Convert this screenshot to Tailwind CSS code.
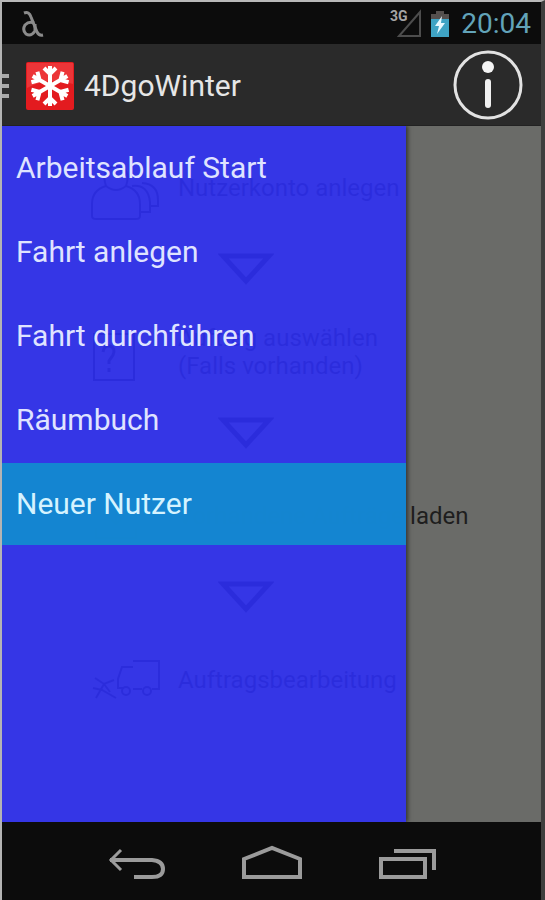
<!DOCTYPE html>
<html lang="de">
<head>
    <meta charset="UTF-8">
    <meta name="viewport" content="width=device-width, initial-scale=1.0">
    <title>4DgoWinter</title>
    <script src="https://cdn.jsdelivr.net/npm/@tailwindcss/browser@4"></script>
</head>
<body class="bg-[#0c0c0c] font-['Roboto','Liberation_Sans',sans-serif]">
    <div class="min-h-screen flex flex-col border-t-2 border-l-2 border-t-[#b9b9b9] border-l-[#b4b4b4] border-r-4 border-r-[#3e3f3e]">

        <!-- Status bar -->
        <div class="h-[42px] shrink-0 flex items-center bg-[#0c0c0c] pl-5 pr-[10px] pt-[2px]">
            <svg class="w-[22px] h-[28px]" viewBox="0 0 22 28" fill="none" stroke="#8b8b8b" stroke-width="3" role="img" aria-label="Debug">
                <path d="M2 3 Q7 1 9 7 L15 22 Q17 26 21 25"/>
                <path d="M12 13 Q7 11 3 15 Q0 20 4 24 Q9 27 13 21 L13 14"/>
            </svg>
            <div class="ml-auto flex items-center gap-2">
                <svg class="w-[34px] h-[32px]" viewBox="0 0 34 32" role="img" aria-label="Signal">
                    <text x="1" y="13" font-size="14" font-weight="700" fill="#a5a5a5">3G</text>
                    <path d="M31 4 V28 H10 Z" fill="none" stroke="#4d4d4d" stroke-width="2"/>
                </svg>
                <svg class="w-[18px] h-[28px]" viewBox="0 0 18 28" role="img" aria-label="Akku">
                    <path d="M5 1 H13 V4 H18 V10 H0 V4 H5 Z" fill="#55504e"/>
                    <path d="M0 9 H18 V27 H0 Z" fill="#3fa3c4"/>
                    <path d="M11 6 L4 16 H8 L6 24 L14 13 H10 Z" fill="#e8f8ff"/>
                </svg>
                <span class="text-[28px] leading-8 text-[#62a3b9] ml-1">20:04</span>
            </div>
        </div>

        <!-- Action bar -->
        <header class="h-[82px] shrink-0 flex items-center bg-[#2a2a2a] pr-[18px] pt-[2px] border-b border-[#222]">
            <button type="button" aria-label="Menü" class="flex items-center gap-4">
                <svg class="w-2 h-[28px]" viewBox="0 0 8 28" stroke="#a8a8a8" stroke-width="4">
                    <path d="M0 4 H7 M0 14 H7 M0 24 H7"/>
                </svg>
                <svg class="w-[48px] h-[48px]" viewBox="0 0 48 48" fill="none">
                    <rect width="48" height="48" rx="2" fill="#e31b1f"/>
                    <path d="M1 1 H47 V22 Q24 14 1 26 Z" fill="#ec3538"/>
                    <g stroke="#fff" stroke-width="4">
                        <path id="arm" d="M24 24 V4 M18 6 L24 12 L30 6"/>
                        <use href="#arm" transform="rotate(60 24 24)"/>
                        <use href="#arm" transform="rotate(120 24 24)"/>
                        <use href="#arm" transform="rotate(180 24 24)"/>
                        <use href="#arm" transform="rotate(240 24 24)"/>
                        <use href="#arm" transform="rotate(300 24 24)"/>
                    </g>
                </svg>
            </button>
            <h1 class="ml-[10px] text-[30px] leading-9 text-[#e6e6e6]">4DgoWinter</h1>
            <button type="button" aria-label="Info" class="ml-auto">
                <svg class="w-[70px] h-[72px]" viewBox="0 0 70 72" fill="none">
                    <circle cx="35" cy="35" r="33" stroke="#e2e2e2" stroke-width="3"/>
                    <circle cx="35" cy="17" r="6" fill="#f4f4f4"/>
                    <path d="M35 32 V55" stroke="#f0f0f0" stroke-width="6" stroke-linecap="round"/>
                </svg>
            </button>
        </header>

        <div class="relative grow overflow-hidden bg-[#6a6b68]">
            <!-- Workflow steps, behind the drawer -->
            <main class="pl-[88px] pt-[21px] text-[24px] leading-7 text-[#1e1e1e] whitespace-nowrap">
                <div class="h-[82px] flex items-center gap-[18px]">
                    <svg class="w-[70px] h-16 shrink-0" viewBox="0 0 70 64" fill="none" stroke="currentColor" stroke-width="2">
                        <path d="M16 30 Q10 12 26 10 Q42 12 36 30 Q26 38 16 30 Z"/>
                        <path d="M16 30 Q2 34 2 48 V60 Q2 63 6 63 H46 Q50 63 50 60 V48 Q50 34 36 30"/>
                        <path d="M42 30 Q58 28 60 46 V56 H51 M52 27 Q68 28 68 44 V50 H61"/>
                    </svg>
                    <span>Nutzerkonto anlegen</span>
                </div>
                <div class="h-[82px] flex items-center pl-32">
                    <svg class="w-[56px] h-9" viewBox="0 0 56 36" fill="none" stroke="currentColor" stroke-width="5">
                        <path d="M5 4 H51 L28 29 Z"/>
                    </svg>
                </div>
                <div class="h-[82px] flex items-center gap-[18px]">
                    <svg class="w-[70px] h-16 shrink-0" viewBox="0 0 70 64" fill="none" stroke="currentColor" stroke-width="2">
                        <path d="M4 14 H44 V60 H4 Z"/>
                        <path d="M13 32 Q14 25 20 26 Q26 28 23 35 L19 41 V44 M19 48 V52" stroke-width="3"/>
                    </svg>
                    <span>Auftrag auswählen<br>(Falls vorhanden)</span>
                </div>
                <div class="h-[82px] flex items-center pl-32">
                    <svg class="w-[56px] h-9" viewBox="0 0 56 36" fill="none" stroke="currentColor" stroke-width="5">
                        <path d="M5 4 H51 L28 29 Z"/>
                    </svg>
                </div>
                <div class="h-[82px] flex items-center gap-[18px]">
                    <svg class="w-[70px] h-16 shrink-0" viewBox="0 0 70 64" fill="none" stroke="currentColor" stroke-width="2">
                        <path d="M26 10 V40 M16 30 L26 40 L36 30 M6 44 V54 H46 V44"/>
                    </svg>
                    <span>Vorhandene Aufträge laden</span>
                </div>
                <div class="h-[82px] flex items-center pl-32">
                    <svg class="w-[56px] h-9" viewBox="0 0 56 36" fill="none" stroke="currentColor" stroke-width="5">
                        <path d="M5 4 H51 L28 29 Z"/>
                    </svg>
                </div>
                <div class="h-[82px] flex items-center gap-[18px]">
                    <svg class="w-[70px] h-16 shrink-0" viewBox="0 0 70 64" fill="none" stroke="currentColor" stroke-width="2">
                        <path d="M43 13 H69 V41 H62 M52 41 H43 Z M43 19 H32 L28 31 V40 H34"/>
                        <circle cx="57" cy="43" r="4"/>
                        <circle cx="36" cy="43" r="4"/>
                        <path d="M5 30 L14 36 L24 32 M14 36 L20 44 M14 36 L6 50 M3 40 L12 42 L26 50"/>
                    </svg>
                    <span>Auftragsbearbeitung</span>
                </div>
            </main>

            <!-- Navigation drawer -->
            <nav class="absolute inset-y-0 left-0 w-3/4 bg-[#2d2ff7]/88 shadow-[2px_0_4px_rgba(0,0,0,0.5)]">
                <ul class="flex flex-col gap-[2px] pt-px text-[30px] leading-9 text-[#dfe3ff]">
                    <li><a href="#" class="flex items-center h-[82px] px-[14px]">Arbeitsablauf Start</a></li>
                    <li><a href="#" class="flex items-center h-[82px] px-[14px]">Fahrt anlegen</a></li>
                    <li><a href="#" class="flex items-center h-[82px] px-[14px]">Fahrt durchführen</a></li>
                    <li><a href="#" class="flex items-center h-[82px] px-[14px]">Räumbuch</a></li>
                    <li><a href="#" aria-current="page" class="flex items-center h-[82px] px-[14px] bg-[#1488d0]/97 text-[#d5f3ff]">Neuer Nutzer</a></li>
                </ul>
            </nav>
        </div>

        <!-- System buttons -->
        <footer class="h-[78px] shrink-0 flex items-center justify-center gap-[76px] bg-[#0c0c0c] pt-1">
            <button type="button" aria-label="Zurück">
                <svg class="w-[60px] h-[36px]" viewBox="0 0 60 36" fill="none" stroke="#9b9b9b" stroke-width="4">
                    <path d="M4 15 H46 Q57 16 57 24 Q57 32 46 32 H28"/>
                    <path d="M15 5 L5 15 L15 25" stroke-width="3"/>
                </svg>
            </button>
            <button type="button" aria-label="Startseite">
                <svg class="w-[60px] h-[36px]" viewBox="0 0 60 36" fill="none" stroke="#9b9b9b" stroke-width="4">
                    <path d="M2 32 V14 L30 3 L58 14 V32 Z"/>
                </svg>
            </button>
            <button type="button" aria-label="Letzte Apps">
                <svg class="w-[60px] h-[36px]" viewBox="0 0 60 36" fill="none" stroke="#9b9b9b" stroke-width="4">
                    <path d="M3 14 H47 V32 H3 Z"/>
                    <path d="M16 6 H56 V25"/>
                </svg>
            </button>
        </footer>
    </div>
</body>
</html>
